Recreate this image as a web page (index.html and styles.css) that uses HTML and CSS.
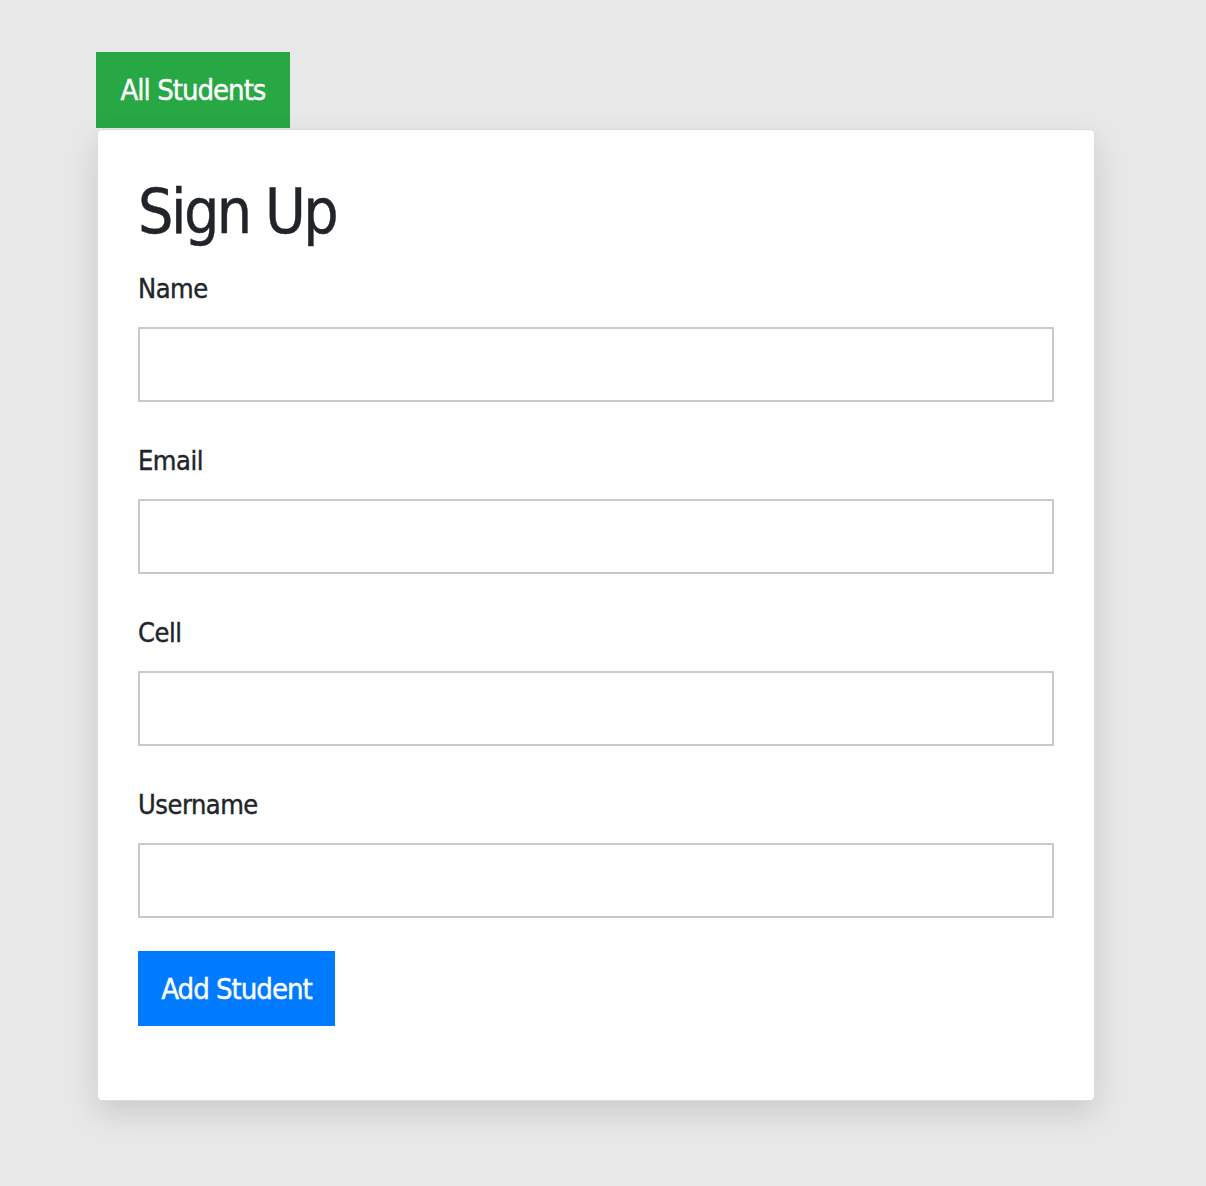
FILE: index.html
```html
<!DOCTYPE html>
<html lang="en">
<head>
<meta charset="utf-8">
<title>Sign Up</title>
<link rel="stylesheet" href="styles.css">
</head>
<body>
<div class="page">
  <a class="btn btn-green" href="#">All Students</a>
  <div class="card">
    <h1 class="title">Sign Up</h1>
    <form class="form">
      <div class="group">
        <label class="label" for="name">Name</label>
        <input class="input" id="name" type="text">
      </div>
      <div class="group">
        <label class="label" for="email">Email</label>
        <input class="input" id="email" type="text">
      </div>
      <div class="group">
        <label class="label" for="cell">Cell</label>
        <input class="input" id="cell" type="text">
      </div>
      <div class="group">
        <label class="label" for="username">Username</label>
        <input class="input" id="username" type="text">
      </div>
      <button class="btn btn-blue" type="button">Add Student</button>
    </form>
  </div>
</div>
</body>
</html>
```
FILE: styles.css
```css
html, body {
  margin: 0;
  padding: 0;
  background: #e8e8e8;
}
body {
  font-family: "DejaVu Sans Condensed", "DejaVu Sans", sans-serif;
  color: #212529;
}
.page {
  padding: 52px 0 86px 96px;
}
.btn {
  display: flex;
  align-items: center;
  justify-content: center;
  box-sizing: border-box;
  border: 0;
  padding: 0;
  color: #fff;
  text-decoration: none;
  font-family: inherit;
  font-size: 29px;
  letter-spacing: -1px;
  -webkit-text-stroke: 0.4px currentColor;
  cursor: pointer;
}
.btn-green {
  width: 194px;
  height: 76px;
  background: #28a745;
}
.card {
  box-sizing: border-box;
  width: 998px;
  margin: 1px 0 0 1px;
  padding: 42px 40px 42px;
  background: #fff;
  border: 1px solid #dcdcdc;
  border-radius: 5px;
  box-shadow: 0 12px 30px rgba(0, 0, 0, 0.13);
}
.title {
  margin: 0 0 20px;
  font-size: 62px;
  font-weight: 400;
  line-height: 79px;
  letter-spacing: -2.5px;
  -webkit-text-stroke: 0.4px currentColor;
}
.form {
  display: flex;
  flex-direction: column;
}
.group {
  display: flex;
  flex-direction: column;
}
.label {
  font-size: 27px;
  line-height: 35px;
  letter-spacing: -0.5px;
  -webkit-text-stroke: 0.4px currentColor;
  margin-bottom: 21px;
}
.input {
  box-sizing: border-box;
  width: 916px;
  height: 75px;
  margin: 0 0 41px;
  border: 2px solid #c9c9c9;
  background: #fff;
  font-size: 24px;
  padding: 0 16px;
}
.group:last-of-type .input {
  margin-bottom: 33px;
}
.btn-blue {
  width: 197px;
  height: 75px;
  margin-bottom: 32px;
  background: #007bff;
}
```
